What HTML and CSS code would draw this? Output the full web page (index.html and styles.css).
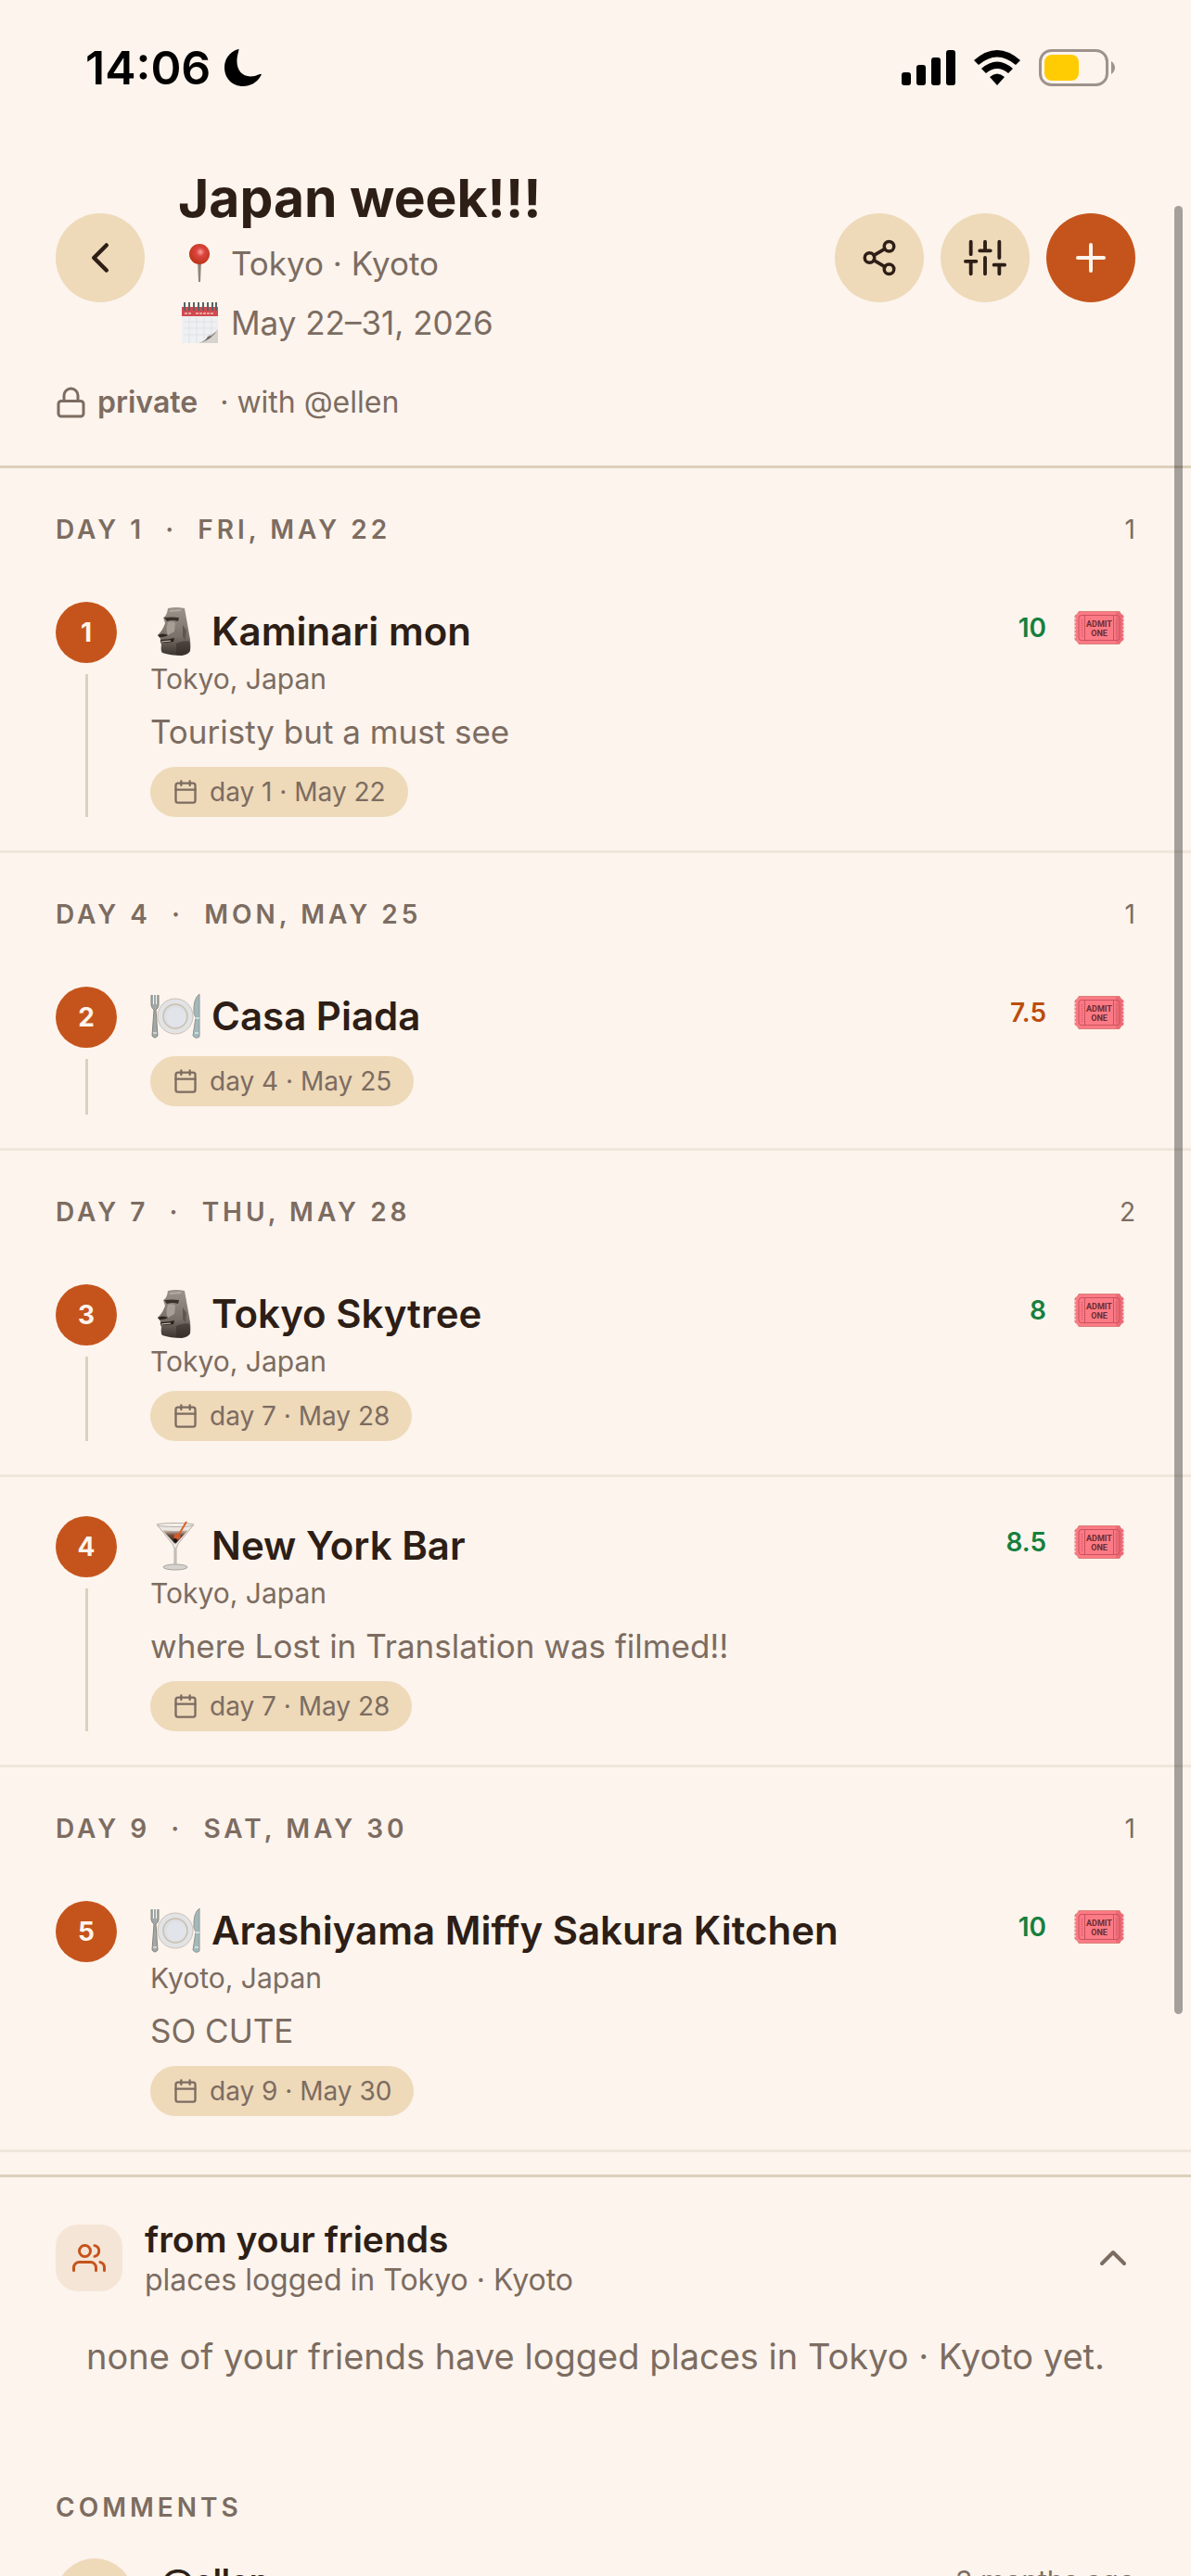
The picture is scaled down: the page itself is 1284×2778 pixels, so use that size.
FILE: index.html
```html
<!DOCTYPE html>
<html lang="en">
<head>
    <meta charset="UTF-8">
    <meta name="viewport" content="width=device-width, initial-scale=1.0">
    <title>Japan week!!!</title>
    <link rel="stylesheet" href="styles.css">
</head>
<body>
    <!-- Shared icons -->
    <svg class="sprite" aria-hidden="true">
        <defs>
            <linearGradient id="stone" x1="0" y1="0" x2="0" y2="1">
                <stop offset="0" stop-color="#9c948b" />
                <stop offset="0.6" stop-color="#7a726a" />
                <stop offset="1" stop-color="#39322c" />
            </linearGradient>
            <radialGradient id="pinHead" cx="0.55" cy="0.4" r="0.6">
                <stop offset="0" stop-color="#f6a5a0" />
                <stop offset="0.35" stop-color="#dd4440" />
                <stop offset="1" stop-color="#b93415" />
            </radialGradient>
            <linearGradient id="drink" x1="0" y1="0" x2="0" y2="1">
                <stop offset="0" stop-color="#d9cabb" />
                <stop offset="0.4" stop-color="#6a4a40" />
                <stop offset="1" stop-color="#33211d" />
            </linearGradient>
        </defs>
        <symbol id="calendar" viewBox="0 0 24 24">
            <rect x="3" y="4" width="18" height="18" rx="2" />
            <path d="M16 2v4M8 2v4M3 10h18" />
        </symbol>
        <symbol id="moai" viewBox="0 0 54 54">
            <path d="M19 2 Q28 0 37 2 L42 30 Q44 40 43 48 Q41 52 34 53 Q22 53 13 50 Q11 48 12 41 Q10 38 11 35 L8 31 Q14 25 16 18 L14 12 Q18 10 19 2Z" fill="url(#stone)" />
            <path d="M15 12 Q23 11 31 12 L30 16 Q24 14 18 16Z" fill="#39312b" />
            <path d="M19 17 Q24 15 27 18 L26 27 L19 31 Q16 26 19 17Z" fill="#a79f96" />
            <path d="M8 31 Q14 28 19 31 Q16 33 10 33Z" fill="#2d2722" />
            <path d="M11 36 Q19 36 26 34 L25 38 Q18 39 12 39Z" fill="#29221d" />
            <path d="M12 38 L22 37" stroke="#d8cfc0" stroke-width="1" />
            <path d="M35 20 L39 26 L38 36 L35 33Z" fill="#5f574f" />
            <path d="M28 40 Q38 36 42 38 Q44 48 42 49 Q36 53 28 52Z" fill="#2f2823" opacity="0.5" />
            <path d="M21 5 L33 4" stroke="#b3aba0" stroke-width="2" />
        </symbol>
        <symbol id="plate" viewBox="0 0 54 54">
            <circle cx="27" cy="27" r="19" fill="#e2e3e5" stroke="#c9c1b6" stroke-width="1" />
            <circle cx="27" cy="27" r="13" fill="#dcdfe4" stroke="#cabfae" stroke-width="1.5" />
            <circle cx="28" cy="28" r="10.500" fill="#e1e4e9" />
            <path d="M1 4 V15 Q2 19 4 20 L2 48 Q5 52 8 48 L6 20 Q9 18 9 15 V4" fill="#9fa9aa" stroke="#8b8379" stroke-width="1" />
            <path d="M3.500 4V14M6.500 4V14" stroke="#fcf4ed" stroke-width="1" />
            <path d="M53 3 Q46 8 47 24 L49 28 L46 48 Q49 52 53 49Z" fill="#9ebabf" stroke="#9a938a" stroke-width="1" />
            <path d="M48 29h5M3 45h4M48 45h4" stroke="#fff" stroke-width="1" />
        </symbol>
        <symbol id="cocktail" viewBox="0 0 54 54">
            <path d="M7 4 H47 L30 25 L28 30 V48 H26 V30 L24 25Z" fill="#ebe7e2" stroke="#b8b1aa" stroke-width="1" />
            <path d="M13 10 Q27 12 41 10 L29 23 Q27 26 25 23Z" fill="url(#drink)" />
            <ellipse cx="27" cy="4.500" rx="20" ry="2" fill="#f4f0eb" stroke="#b5afa8" stroke-width="1" />
            <path d="M39 1 L29 18" stroke="#d9602c" stroke-width="2" />
            <circle cx="29" cy="17" r="3.500" fill="#d35a2c" />
            <circle cx="27" cy="21" r="2" fill="#1d1513" />
            <ellipse cx="27" cy="50" rx="13" ry="3" fill="#d6d3cf" stroke="#aaa59f" stroke-width="1" />
            <path d="M27 29V47" stroke="#c2bdb8" stroke-width="2" />
        </symbol>
        <symbol id="ticket" viewBox="0 0 54 36">
            <path d="M5 0.500 H49 Q50 4 53 5 V31 Q50 32 49 35.500 H5 Q4 32 1 31 V5 Q4 4 5 0.500Z" fill="#fc7a85" stroke="#dc8078" stroke-width="1" />
            <path d="M45 1 H49 Q50 4 53 5 V31 Q50 32 49 35 H45Z" fill="#ee6a76" />
            <path d="M1 7V30M53 7V30" stroke="#fcf4ed" stroke-width="1" stroke-dasharray="2 2" />
            <rect x="5" y="4.500" width="44" height="27" rx="3" fill="none" stroke="#c9525e" stroke-width="1" />
            <path d="M11.500 5V31M42.500 5V31" stroke="#c9525e" stroke-width="1" />
            <path d="M8.500 9V28M45.500 9V28" stroke="#d9626e" stroke-width="2" stroke-dasharray="1 1" />
        </symbol>
    </svg>

    <div class="status-bar">
        <div class="status-left">
            <span class="clock">14:06</span>
            <svg width="42" height="42" viewBox="0 0 42 42"><path d="M16 1 Q17 0 16 4 C10 24 22 36 39 28 Q42 27 40 30 C36 37 29 41 21 41 C9 41 1 32 1 21 C1 11 7 4 16 1Z" fill="#000" /></svg>
        </div>
        <div class="status-right">
            <svg width="58" height="38" viewBox="0 0 58 38">
                <rect x="0" y="24" width="10" height="14" rx="3" />
                <rect x="16" y="16" width="10" height="22" rx="3" />
                <rect x="32" y="8" width="10" height="30" rx="3" />
                <rect x="48" y="0" width="10" height="38" rx="3" />
            </svg>
            <svg width="52" height="38" viewBox="0 0 52 38">
                <path d="M1 11 Q26 -11 51 11 L46 16 Q26 -1 6 16Z" />
                <path d="M9 20 Q26 5 43 20 L38 25 Q26 15 14 25Z" />
                <path d="M18 29 Q26 22 34 29 L26 38Z" />
            </svg>
            <svg width="82" height="40" viewBox="0 0 82 40">
                <rect x="1.500" y="1.500" width="72" height="37" rx="12" fill="none" stroke="#9d938c" stroke-width="3" />
                <rect x="6" y="6" width="37" height="28" rx="8" fill="#ffcc04" />
                <path d="M78 13 Q82 16 82 20 Q82 24 78 27Z" fill="#9d938c" />
            </svg>
        </div>
    </div>

    <header class="trip-header">
        <div class="trip-top">
            <button class="round-btn" aria-label="Back">
                <svg class="icon" width="54" height="54" viewBox="0 0 24 24"><path d="M15 18l-6-6 6-6" /></svg>
            </button>
            <div class="trip-info">
                <h1>Japan week!!!</h1>
                <p class="meta">
                    <svg width="46" height="46" viewBox="0 0 46 46">
                        <path d="M21 20h4l-1 23h-2z" fill="#8f857d" />
                        <circle cx="23" cy="13" r="11" fill="url(#pinHead)" />
                    </svg>
                    Tokyo · Kyoto
                </p>
                <p class="meta">
                    <svg width="46" height="46" viewBox="0 0 46 46">
                        <path d="M4 6H43V45H4Z" fill="#eff0f1" />
                        <path d="M4 6H43V16H4Z" fill="#cf4a50" />
                        <path d="M7 13h7M19 13h20" stroke="#eda39a" stroke-width="2" stroke-dasharray="3 1" />
                        <path d="M6 22H42M6 29H42M6 36H38M12 17V45M20 17V45M28 17V40M36 17V36" stroke="#dde1e8" stroke-width="1" />
                        <path d="M7 1V10M12 1V10M17 1V10M22 1V10M27 1V10M32 1V10M37 1V10M41 1V10" stroke="#5b6263" stroke-width="2" />
                        <path d="M22 45 Q32 41 33 36 Q39 35 43 30 V45Z" fill="#d6d2ce" />
                        <path d="M22 45 Q36 42 43 30 Q38 37 32 38 Q30 43 22 45Z" fill="#6d6661" />
                    </svg>
                    May 22–31, 2026
                </p>
            </div>
            <div class="actions">
                <button class="round-btn" aria-label="Share">
                    <svg class="icon" width="42" height="42" viewBox="0 0 24 24"><circle cx="18" cy="5" r="3" /><circle cx="6" cy="12" r="3" /><circle cx="18" cy="19" r="3" /><path d="M8.600 13.500l6.800 4M15.400 6.500l-6.800 4" /></svg>
                </button>
                <button class="round-btn" aria-label="Filters">
                    <svg class="icon" width="46" height="46" viewBox="0 0 24 24"><path d="M4 21v-7M4 10V3M12 21v-9M12 8V3M20 21v-5M20 12V3M1 14h6M9 8h6M17 16h6" /></svg>
                </button>
                <button class="round-btn add" aria-label="Add place">
                    <svg class="icon" width="48" height="48" viewBox="0 0 24 24"><path d="M12 5v14M5 12h14" /></svg>
                </button>
            </div>
        </div>
        <p class="privacy">
            <svg class="icon" width="33" height="36" viewBox="1 0 22 24"><rect x="3" y="11" width="18" height="11" rx="2" /><path d="M7 11V7a5 5 0 0 1 10 0v4" /></svg>
            <b>private</b>
            <span>· with @ellen</span>
        </p>
    </header>

    <main>
        <section>
            <div class="day-header"><h2>Day 1 &nbsp;·&nbsp; Fri, May 22</h2><span>1</span></div>
            <article class="place">
                <div class="rail"><span class="number">1</span><span class="line"></span></div>
                <div class="details">
                    <h3><svg width="54" height="54"><use href="#moai" /></svg>Kaminari mon</h3>
                    <p class="location">Tokyo, Japan</p>
                    <p class="note">Touristy but a must see</p>
                    <span class="pill"><svg class="icon" width="28" height="28"><use href="#calendar" /></svg>day 1 · May 22</span>
                </div>
                <div class="side">
                    <span class="rating">10</span>
                    <button class="ticket"><svg width="54" height="36"><use href="#ticket" /><text x="27" y="17">ADMIT</text><text x="27" y="27">ONE</text></svg></button>
                </div>
            </article>
        </section>

        <section>
            <div class="day-header"><h2>Day 4 &nbsp;·&nbsp; Mon, May 25</h2><span>1</span></div>
            <article class="place">
                <div class="rail"><span class="number">2</span><span class="line"></span></div>
                <div class="details">
                    <h3><svg width="54" height="54"><use href="#plate" /></svg>Casa Piada</h3>
                    <span class="pill"><svg class="icon" width="28" height="28"><use href="#calendar" /></svg>day 4 · May 25</span>
                </div>
                <div class="side">
                    <span class="rating mid">7.5</span>
                    <button class="ticket"><svg width="54" height="36"><use href="#ticket" /><text x="27" y="17">ADMIT</text><text x="27" y="27">ONE</text></svg></button>
                </div>
            </article>
        </section>

        <section>
            <div class="day-header"><h2>Day 7 &nbsp;·&nbsp; Thu, May 28</h2><span>2</span></div>
            <article class="place">
                <div class="rail"><span class="number">3</span><span class="line"></span></div>
                <div class="details">
                    <h3><svg width="54" height="54"><use href="#moai" /></svg>Tokyo Skytree</h3>
                    <p class="location">Tokyo, Japan</p>
                    <span class="pill"><svg class="icon" width="28" height="28"><use href="#calendar" /></svg>day 7 · May 28</span>
                </div>
                <div class="side">
                    <span class="rating">8</span>
                    <button class="ticket"><svg width="54" height="36"><use href="#ticket" /><text x="27" y="17">ADMIT</text><text x="27" y="27">ONE</text></svg></button>
                </div>
            </article>
            <article class="place">
                <div class="rail"><span class="number">4</span><span class="line"></span></div>
                <div class="details">
                    <h3><svg width="54" height="54"><use href="#cocktail" /></svg>New York Bar</h3>
                    <p class="location">Tokyo, Japan</p>
                    <p class="note">where Lost in Translation was filmed!!</p>
                    <span class="pill"><svg class="icon" width="28" height="28"><use href="#calendar" /></svg>day 7 · May 28</span>
                </div>
                <div class="side">
                    <span class="rating">8.5</span>
                    <button class="ticket"><svg width="54" height="36"><use href="#ticket" /><text x="27" y="17">ADMIT</text><text x="27" y="27">ONE</text></svg></button>
                </div>
            </article>
        </section>

        <section>
            <div class="day-header"><h2>Day 9 &nbsp;·&nbsp; Sat, May 30</h2><span>1</span></div>
            <article class="place">
                <div class="rail"><span class="number">5</span></div>
                <div class="details">
                    <h3><svg width="54" height="54"><use href="#plate" /></svg>Arashiyama Miffy Sakura Kitchen</h3>
                    <p class="location">Kyoto, Japan</p>
                    <p class="note">SO CUTE</p>
                    <span class="pill"><svg class="icon" width="28" height="28"><use href="#calendar" /></svg>day 9 · May 30</span>
                </div>
                <div class="side">
                    <span class="rating">10</span>
                    <button class="ticket"><svg width="54" height="36"><use href="#ticket" /><text x="27" y="17">ADMIT</text><text x="27" y="27">ONE</text></svg></button>
                </div>
            </article>
        </section>
    </main>

    <section class="friends">
        <button class="friends-toggle" aria-expanded="true">
            <span class="friends-icon">
                <svg class="icon" width="36" height="36" viewBox="0 0 24 24"><path d="M17 21v-2a4 4 0 0 0-4-4H5a4 4 0 0 0-4 4v2" /><circle cx="9" cy="7" r="4" /><path d="M23 21v-2a4 4 0 0 0-3-3.900M16 3.100a4 4 0 0 1 0 7.800" /></svg>
            </span>
            <span class="friends-text">
                <strong>from your friends</strong>
                <span>places logged in Tokyo · Kyoto</span>
            </span>
            <svg class="icon chevron" width="48" height="48" viewBox="0 0 24 24"><path d="M18 15l-6-6-6 6" /></svg>
        </button>
        <p class="empty">none of your friends have logged places in Tokyo · Kyoto yet.</p>
    </section>

    <section class="comments">
        <h2>Comments</h2>
        <article class="comment">
            <span class="avatar"></span>
            <strong>@ellen</strong>
            <time>3 months ago</time>
        </article>
    </section>

    <div class="scroll-thumb"></div>
</body>
</html>
```
FILE: styles.css
```css
* {
    box-sizing: border-box;
}

html {
    height: 100%;
    overflow: hidden;
}

body {
    position: relative;
    height: 100%;
    margin: 0;
    overflow: hidden;
    background-color: #fcf4ed;
    color: #2d1e16;
    font-family: "Inter", "Liberation Sans", sans-serif;
}

h1, h2, h3, p {
    margin: 0;
}

button {
    padding: 0;
    border: none;
    background: none;
    color: inherit;
    font: inherit;
    cursor: pointer;
}

svg {
    display: block;
    flex: none;
}

.sprite {
    position: absolute;
    width: 0;
    height: 0;
}

.icon {
    fill: none;
    stroke: currentColor;
    stroke-width: 2;
    stroke-linecap: round;
    stroke-linejoin: round;
}

/* Status bar */
.status-bar {
    display: flex;
    align-items: center;
    justify-content: space-between;
    height: 144px;
    padding: 2px 82px 0 92px;
    color: #000;
}

.status-left {
    display: flex;
    align-items: center;
    gap: 14px;
}

.clock {
    font-size: 50px;
    font-weight: 600;
}

.status-right {
    display: flex;
    align-items: center;
    gap: 19px;
}

/* Trip header */
.trip-header {
    padding: 32px 60px 44px;
    border-bottom: 3px solid #ddd0bb;
}

.trip-top {
    display: flex;
    align-items: center;
}

.round-btn {
    display: flex;
    flex: none;
    align-items: center;
    justify-content: center;
    width: 96px;
    height: 96px;
    border-radius: 50%;
    background-color: #eed9b9;
}

.round-btn.add {
    background-color: #c5541c;
    color: #fcf4ed;
}

.trip-info {
    flex: 1;
    padding-left: 36px;
}

h1 {
    font-size: 57px;
    font-weight: 700;
    line-height: 76px;
}

.meta {
    display: flex;
    align-items: center;
    gap: 11px;
    height: 64px;
    color: #7c6c61;
    font-size: 35px;
}

.actions {
    display: flex;
    gap: 18px;
}

.privacy {
    display: flex;
    align-items: center;
    gap: 12px;
    margin-top: 30px;
    color: #7c6c61;
    font-size: 32px;
    line-height: 48px;
}

.privacy b {
    font-weight: 600;
    margin-right: 12px;
}

/* Days */
.day-header {
    display: flex;
    align-items: center;
    justify-content: space-between;
    height: 102px;
    padding: 30px 60px 0;
    color: #7c6c61;
    font-size: 28px;
}

h2 {
    color: #7c6c61;
    font-size: 28px;
    font-weight: 600;
    letter-spacing: 4px;
    text-transform: uppercase;
}

.place {
    display: flex;
    gap: 36px;
    padding: 42px 60px 36px;
    border-bottom: 3px solid #f0e6dc;
}

.rail {
    display: flex;
    flex-direction: column;
    align-items: center;
    gap: 12px;
}

.number {
    display: flex;
    align-items: center;
    justify-content: center;
    width: 66px;
    height: 66px;
    border-radius: 50%;
    background-color: #c5541c;
    color: #fcf4ed;
    font-size: 28px;
    font-weight: 700;
}

.line {
    flex: 1;
    width: 3px;
    min-height: 60px;
    background-color: #ddd0bb;
}

.details {
    flex: 1;
}

h3 {
    display: flex;
    align-items: center;
    gap: 12px;
    height: 63px;
    font-size: 42px;
    font-weight: 600;
}

.location {
    color: #7c6c61;
    font-size: 30px;
    line-height: 40px;
}

.note {
    margin-top: 12px;
    color: #7c6c61;
    font-size: 35px;
    line-height: 51px;
}

.pill {
    display: flex;
    align-items: center;
    gap: 12px;
    width: fit-content;
    height: 54px;
    margin-top: 12px;
    padding: 0 24px;
    border-radius: 27px;
    background-color: #eed9b9;
    color: #7c6c61;
    font-size: 28px;
}

.side {
    display: flex;
    align-items: center;
    align-self: flex-start;
    height: 56px;
    gap: 30px;
}

.rating {
    color: #15803d;
    font-size: 28px;
    font-weight: 600;
}

.rating.mid {
    color: #bb4d0d;
}

.ticket {
    padding-right: 12px;
}

.ticket text {
    fill: #6d2c33;
    font-family: "Roboto", sans-serif;
    font-size: 9px;
    font-weight: 700;
    text-anchor: middle;
}

/* Friends */
.friends {
    margin-top: 24px;
    padding: 42px 60px 0;
    border-top: 3px solid #ddd0bb;
}

.friends-toggle {
    display: flex;
    align-items: center;
    width: 100%;
    height: 90px;
    gap: 24px;
    text-align: left;
}

.friends-icon {
    display: flex;
    align-items: center;
    justify-content: center;
    width: 72px;
    height: 72px;
    border-radius: 24px;
    background-color: #f5e5d7;
    color: #c5541c;
}

.friends-text {
    display: flex;
    flex: 1;
    flex-direction: column;
    color: #7c6c61;
    font-size: 32px;
    line-height: 40px;
}

.friends-text strong {
    color: #2d1e16;
    font-size: 39px;
    font-weight: 600;
    line-height: 48px;
}

.chevron {
    color: #7c6c61;
}

.empty {
    padding: 33px 0 60px;
    color: #7c6c61;
    font-size: 38px;
    line-height: 56px;
    text-align: center;
}

/* Comments */
.comments {
    padding: 54px 60px 0;
}

.comments h2 {
    line-height: 42px;
}

.comment {
    display: flex;
    gap: 30px;
    margin-top: 34px;
}

.avatar {
    width: 84px;
    height: 84px;
    border-radius: 50%;
    background-color: #eed9b9;
}

.comment strong {
    flex: 1;
    font-size: 35px;
    font-weight: 600;
    line-height: 48px;
}

.comment time {
    color: #7c6c61;
    font-size: 30px;
    line-height: 48px;
}

/* Scroll indicator lies over the page */
.scroll-thumb {
    position: absolute;
    top: 8%;
    right: 9px;
    width: 9px;
    height: 70.2%;
    border-radius: 5px;
    background-color: rgba(0, 0, 0, 0.35);
}
```
